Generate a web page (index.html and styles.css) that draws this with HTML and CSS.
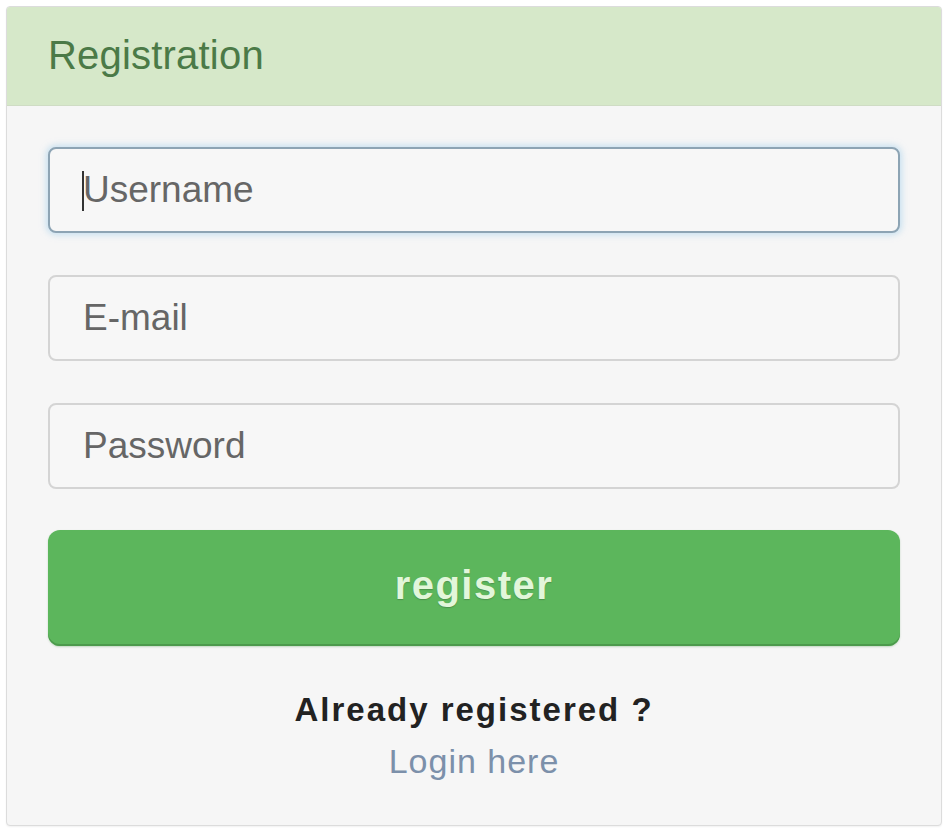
FILE: index.html
```
<!DOCTYPE html>
<html lang="en">
<head>
<meta charset="utf-8">
<title>Registration</title>
<link rel="stylesheet" href="styles.css">
</head>
<body>
  <div class="panel">
    <div class="panel-heading">
      <h3 class="panel-title">Registration</h3>
    </div>
    <div class="panel-body">
      <form class="form">
        <div class="field focused">
          <input class="input" type="text" placeholder="Username">
          <span class="caret"></span>
        </div>
        <div class="field">
          <input class="input" type="email" placeholder="E-mail">
        </div>
        <div class="field">
          <input class="input" type="password" placeholder="Password">
        </div>
        <button class="btn" type="button">register</button>
      </form>
      <div class="footer">
        <p class="already">Already registered ?</p>
        <a class="login" href="#">Login here</a>
      </div>
    </div>
  </div>
</body>
</html>
```
FILE: styles.css
```
html, body {
  margin: 0;
  padding: 0;
  background: #ffffff;
}

body {
  font-family: "Liberation Sans", Arial, sans-serif;
  padding: 6px;
}

.panel {
  width: 936px;
  box-sizing: border-box;
  border: 1px solid #dcdcdc;
  border-radius: 4px;
  background: #f6f6f6;
  box-shadow: 0 1px 2px rgba(0,0,0,0.06);
  overflow: hidden;
}

.panel-heading {
  height: 98px;
  background: #d6e8c9;
  border-bottom: 1px solid #cfdcc4;
  padding-left: 41px;
  display: flex;
  align-items: center;
}

.panel-title {
  margin: 0;
  font-size: 40px;
  font-weight: normal;
  color: #4b7a47;
  letter-spacing: 0.2px;
  position: relative;
  top: -1px;
}

.panel-body {
  padding: 41px 41px 40px;
}

.form {
  display: flex;
  flex-direction: column;
  gap: 42px;
}

.field {
  position: relative;
}

.input {
  display: block;
  width: 100%;
  height: 86px;
  box-sizing: border-box;
  border: 2px solid #d4d4d4;
  border-radius: 8px;
  background: #f7f7f7;
  padding: 0 0 0 33px;
  font-family: "Liberation Sans", Arial, sans-serif;
  font-size: 37px;
  color: #555;
  outline: none;
}

.input::placeholder {
  color: #666666;
  opacity: 1;
}

.focused .input {
  border-color: #8da4b4;
  box-shadow: 0 0 6px 2px rgba(160, 205, 235, 0.55);
}

.caret {
  position: absolute;
  left: 34px;
  top: 24px;
  width: 2px;
  height: 40px;
  background: #333;
}

.btn {
  height: 116px;
  width: 100%;
  border: none;
  border-radius: 12px;
  background: #5cb65c;
  box-shadow: inset 0 -2px 0 #4c9a4c, 0 1px 2px rgba(70, 140, 70, 0.3);
  color: #e2f6da;
  font-family: "Liberation Sans", Arial, sans-serif;
  font-size: 40px;
  font-weight: bold;
  letter-spacing: 1.5px;
  text-shadow: 0 1px 1px rgba(60, 110, 60, 0.5);
  cursor: pointer;
  margin-top: -1px;
  padding-bottom: 6px;
}

.footer {
  margin-top: 42px;
  text-align: center;
}

.already {
  margin: 0;
  font-size: 33px;
  line-height: 44px;
  font-weight: bold;
  color: #222;
  letter-spacing: 2px;
}

.login {
  display: inline-block;
  margin-top: 5px;
  font-size: 34px;
  line-height: 48px;
  color: #7c90aa;
  letter-spacing: 1px;
  text-decoration: none;
}
```
